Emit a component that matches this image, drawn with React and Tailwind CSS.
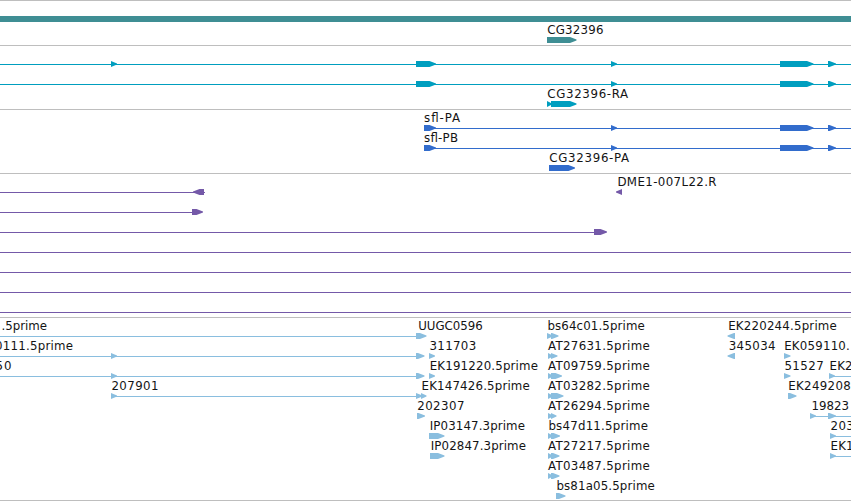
import React from "react";

// Feature: [start, end, kind]; kind "r" points right, "l" points left, "b" is a plain bar.
// Label: [text, ink start, ink end].
const AT = [548.3, 649.3];
const EXONS = [[611, 617, "r"], [780, 813.5, "r"], [828, 836, "r"]];

const TRACKS = [
  {
    name: "genes",
    pad: "pt-[2px] pb-px",
    color: "text-[#3f8e94]",
    rows: [
      { tall: true, features: [[0, 851, "b"]] },
      { labels: [["CG32396", 547.6, 603]], features: [[547, 576.5, "r"]] },
    ],
  },
  {
    name: "transcripts",
    pad: "pt-[2px] pb-px",
    color: "text-[#009ebf]",
    rows: [
      { lines: [[0, 851]], features: [[111, 117, "r"], [416, 436, "r"], ...EXONS] },
      { lines: [[0, 851]], features: [[416, 436, "r"], ...EXONS] },
      { labels: [["CG32396-RA", 547.6, 627.7]], features: [[547, 552, "r"], [551, 576.5, "r"]] },
    ],
  },
  {
    name: "proteins",
    pad: "pt-[2px] pb-px",
    color: "text-[#326ccc]",
    rows: [
      { labels: [["sfl-PA", 424.3, 459.7]], lines: [[424, 851]], features: [[424, 436, "r"], ...EXONS] },
      { labels: [["sfl-PB", 424.3, 457.5]], lines: [[424, 851]], features: [[424, 436, "r"], ...EXONS] },
      { labels: [["CG32396-PA", 549.5, 628.7]], features: [[549, 575, "r"]] },
    ],
  },
  {
    name: "clones",
    pad: "pt-[2px] pb-px",
    color: "text-[#7459a8]",
    rows: [
      { labels: [["DME1-007L22.R", 617.7, 716]], lines: [[0, 205]], features: [[193, 204, "l"], [616, 622, "l"]] },
      { lines: [[0, 200]], features: [[192, 203, "r"]] },
      { lines: [[0, 600]], features: [[594, 607, "r"]] },
      { lines: [[0, 851]] },
      { lines: [[0, 851]] },
      { lines: [[0, 851]] },
      { lines: [[0, 851]] },
    ],
  },
  {
    name: "ests",
    pad: "pt-[2px]",
    color: "text-[#8abedf]",
    rows: [
      {
        labels: [[".5prime", 1.7, 46.5], ["UUGC0596", 418.5, 482.3], ["bs64c01.5prime", 547.7, 644.3], ["EK220244.5prime", 728.5, 836.3]],
        lines: [[0, 418]],
        features: [[416, 426.5, "r"], [547, 553, "r"], [551, 558.5, "r"], [727.5, 735, "l"]],
      },
      {
        labels: [["0111.5prime", -4.7, 72.5], ["311703", 429.8, 475.7], ["AT27631.5prime", ...AT], ["345034", 729, 775], ["EK059110.", 784.5, 849.3]],
        lines: [[0, 418]],
        features: [[111, 117, "r"], [416, 424.5, "r"], [429, 435, "r"], [548, 553, "r"], [551, 557.5, "r"], [727.5, 735, "l"], [784, 790.5, "r"]],
      },
      {
        labels: [["50", -4.2, 11], ["EK191220.5prime", 430, 537.5], ["AT09759.5prime", ...AT], ["51527", 784.7, 823.3], ["EK220244.5prime", 829.8, 937.5]],
        lines: [[0, 418], [829, 851]],
        features: [[111, 117, "r"], [416, 424.5, "r"], [429, 435, "r"], [548, 553, "r"], [551, 562, "r"], [784, 790.5, "r"], [829, 835, "r"]],
      },
      {
        labels: [["207901", 111.7, 158], ["EK147426.5prime", 421.8, 529.3], ["AT03282.5prime", ...AT], ["EK249208", 788.5, 850.3]],
        lines: [[111, 422]],
        features: [[111, 117, "r"], [416, 422.5, "r"], [421, 426.5, "r"], [548, 553, "r"], [551, 563.5, "r"], [788, 796.5, "r"]],
      },
      {
        labels: [["202307", 417.5, 464], ["AT26294.5prime", ...AT], ["19823", 811.7, 848.5]],
        lines: [[810, 851]],
        features: [[417, 425, "r"], [548, 553, "r"], [551, 556.5, "r"], [810, 816, "r"], [828, 836, "r"]],
      },
      {
        labels: [["IP03147.3prime", 430, 524.5], ["bs47d11.5prime", 548.7, 647.5], ["203", 830.8, 853.3]],
        lines: [[830, 851]],
        features: [[429, 444.5, "r"], [548, 553, "r"], [551, 560, "r"], [830, 836, "r"]],
      },
      {
        labels: [["IP02847.3prime", 431, 525.5], ["AT27217.5prime", ...AT], ["EK191220.5prime", 830.8, 938.3]],
        lines: [[830, 851]],
        features: [[430, 444.5, "r"], [548, 553, "r"], [551, 559.5, "r"], [830, 836, "r"]],
      },
      { labels: [["AT03487.5prime", ...AT]], features: [[548, 553, "r"], [551, 559.5, "r"]] },
      { labels: [["bs81a05.5prime", 556.7, 654.3]], features: [[556, 565.5, "r"]] },
    ],
  },
];

function Feature({ start, end, kind }) {
  if (kind === "b") {
    return <rect x={start} y="13" width={end - start} height="6" />;
  }
  const tip = Math.min(6.5, end - start);
  const points =
    kind === "r"
      ? `${start},13 ${end - tip},13 ${end},15.6 ${end},16.4 ${end - tip},19 ${start},19`
      : `${end},13 ${start + tip},13 ${start},15.6 ${start},16.4 ${start + tip},19 ${end},19`;
  return <polygon points={points} />;
}

function Row({ row }) {
  const { labels = [], lines = [], features = [], tall } = row;
  return (
    <svg
      className={tall ? "block h-[21px] w-[851px] fill-current" : "block h-5 w-[851px] fill-current"}
      viewBox={tall ? "0 0 851 21" : "0 0 851 20"}
    >
      {lines.map(([a, b], i) => (
        <rect key={i} x={a} y="16" width={b - a} height="1" />
      ))}
      {features.map(([start, end, kind], i) => (
        <Feature key={i} start={start} end={end} kind={kind} />
      ))}
      {labels.map(([text, a, b], i) => (
        <text
          key={i}
          x={a - 0.3}
          y="10"
          textLength={b - a + 0.8}
          className="fill-[#141414] font-['DejaVu_Sans',sans-serif] text-[11.8px]"
        >
          {text}
        </text>
      ))}
    </svg>
  );
}

export default function App() {
  return (
    <main className="flex h-[501px] w-[851px] flex-col overflow-hidden border-t border-[#bebebe] bg-white">
      {TRACKS.map((track) => (
        <section key={track.name} className={`shrink-0 border-b border-[#bebebe] ${track.pad} ${track.color}`}>
          {track.rows.map((row, i) => (
            <Row key={i} row={row} />
          ))}
        </section>
      ))}
    </main>
  );
}
